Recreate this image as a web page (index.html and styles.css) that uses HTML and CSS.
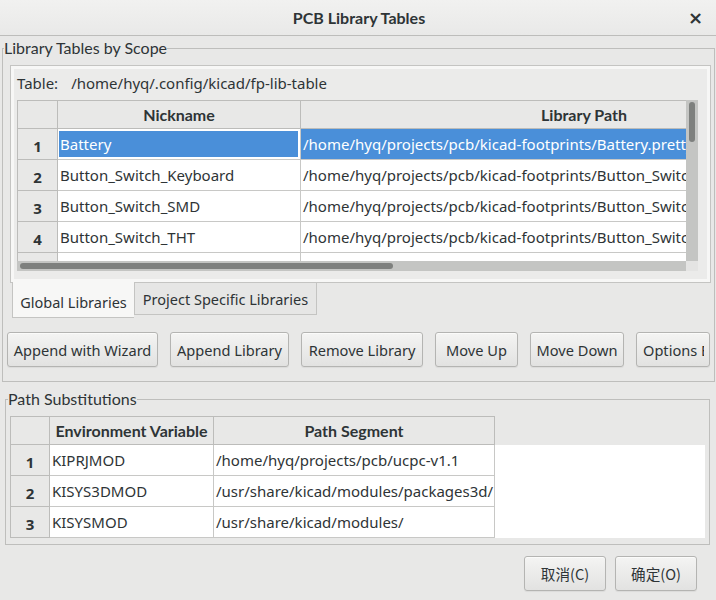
FILE: index.html
```html
<!DOCTYPE html>
<html lang="en">
<head>
<meta charset="utf-8">
<title>PCB Library Tables</title>
<link rel="stylesheet" href="styles.css">
</head>
<body>
<div class="window">
  <header class="titlebar">
    <span class="title">PCB Library Tables</span>
    <span class="close">×</span>
  </header>
  <main class="content">
    <fieldset class="group scope">
      <legend>Library Tables by Scope</legend>
      <div class="group-body scope-body">
        <div class="notebook">
          <div class="page">
            <div class="table-path"><span class="tp-label">Table:</span><span>/home/hyq/.config/kicad/fp-lib-table</span></div>
            <div class="gridwrap">
              <div class="viewport">
                <div class="grid lib-grid">
                  <div class="cell corner"></div>
                  <div class="cell colhead">Nickname</div>
                  <div class="cell colhead">Library Path</div>

                  <div class="cell rowhead">1</div>
                  <div class="cell sel-edit"><span class="editor">Battery</span></div>
                  <div class="cell sel">/home/hyq/projects/pcb/kicad-footprints/Battery.pretty</div>

                  <div class="cell rowhead">2</div>
                  <div class="cell">Button_Switch_Keyboard</div>
                  <div class="cell">/home/hyq/projects/pcb/kicad-footprints/Button_Switch_Keyboard.pretty</div>

                  <div class="cell rowhead">3</div>
                  <div class="cell">Button_Switch_SMD</div>
                  <div class="cell">/home/hyq/projects/pcb/kicad-footprints/Button_Switch_SMD.pretty</div>

                  <div class="cell rowhead">4</div>
                  <div class="cell">Button_Switch_THT</div>
                  <div class="cell">/home/hyq/projects/pcb/kicad-footprints/Button_Switch_THT.pretty</div>

                  <div class="cell rowhead">5</div>
                  <div class="cell">Buzzer_Beeper</div>
                  <div class="cell">/home/hyq/projects/pcb/kicad-footprints/Buzzer_Beeper.pretty</div>
                </div>
              </div>
              <div class="vscroll"><div class="vthumb"></div></div>
              <div class="hscroll"><div class="hthumb"></div></div>
              <div class="scorner"></div>
            </div>
          </div>
        </div>
        <div class="tabs">
          <div class="tab active">Global Libraries</div>
          <div class="tab">Project Specific Libraries</div>
        </div>
        <div class="actions">
          <button class="btn w-wizard">Append with Wizard</button>
          <button class="btn w-append">Append Library</button>
          <button class="btn w-remove">Remove Library</button>
          <button class="btn w-up">Move Up</button>
          <button class="btn w-down">Move Down</button>
          <button class="btn w-options"><span class="clip">Options Editor</span></button>
        </div>
      </div>
    </fieldset>

    <fieldset class="group subst">
      <legend>Path Substitutions</legend>
      <div class="group-body subst-body">
        <div class="env-window">
          <div class="grid env-grid">
            <div class="cell corner"></div>
            <div class="cell colhead">Environment Variable</div>
            <div class="cell colhead">Path Segment</div>

            <div class="cell rowhead">1</div>
            <div class="cell">KIPRJMOD</div>
            <div class="cell">/home/hyq/projects/pcb/ucpc-v1.1</div>

            <div class="cell rowhead">2</div>
            <div class="cell">KISYS3DMOD</div>
            <div class="cell">/usr/share/kicad/modules/packages3d/</div>

            <div class="cell rowhead">3</div>
            <div class="cell">KISYSMOD</div>
            <div class="cell">/usr/share/kicad/modules/</div>
          </div>
        </div>
      </div>
    </fieldset>

    <div class="dialog-buttons">
      <button class="btn dlg">取消(C)</button>
      <button class="btn dlg">确定(O)</button>
    </div>
  </main>
</div>
</body>
</html>
```

FILE: styles.css
```css
* { box-sizing: border-box; }

html, body {
  margin: 0;
  padding: 0;
}

body {
  width: 716px;
  height: 600px;
  overflow: hidden;
  background: #e8e8e7;
  color: #2e3436;
  font-family: "Noto Sans", "Noto Sans CJK SC", sans-serif;
  font-size: 15px;
}

.window {
  width: 716px;
  height: 600px;
  display: flex;
  flex-direction: column;
}

/* Title bar */
.titlebar {
  height: 36px;
  flex: none;
  display: flex;
  align-items: center;
  justify-content: center;
  position: relative;
  background: linear-gradient(#f1f1f0, #e9e9e8);
  border-bottom: 1px solid #bdbdbb;
}

.title {
  font-family: Lato, "Noto Sans", sans-serif;
  font-weight: 700;
  font-size: 16px;
  color: #2e3436;
  margin-left: 2px;
}

.close {
  position: absolute;
  right: 13px;
  top: 7px;
  font-size: 18px;
  font-weight: 700;
  color: #2e3436;
  font-family: "DejaVu Sans", sans-serif;
}

/* Groups */
.content {
  display: flex;
  flex-direction: column;
}

.group {
  margin: 0;
  padding: 0;
  border: 1px solid #bebebc;
  min-width: 0;
}

.group legend {
  padding: 0;
  font-family: Lato, "Noto Sans", sans-serif;
  font-size: 16px;
  line-height: 18px;
  color: #2e3436;
}

.scope {
  margin: 3px 1px 0 2px;
}

.scope legend {
  margin-left: 1px;
}

.scope-body {
  padding: 8px 3px 14px 4px;
}

.subst {
  margin: 8px 6px 0 5px;
}

.subst legend {
  margin-left: 2px;
}

.subst-body {
  padding: 8px 4px 6px 4px;
}

/* Notebook */
.notebook {
  margin-left: 3px;
  border: 1px solid #c4c4c2;
  background: #f7f7f6;
  padding: 3px 3px 3px 3px;
}

.page {
  background: #ebebea;
  padding: 5px 9px 8px 3px;
}

.table-path {
  display: flex;
  gap: 13px;
  line-height: 18px;
  height: 18px;
  margin-bottom: 8px;
  color: #2e3436;
}

.gridwrap {
  display: grid;
  grid-template-columns: 669px 12px;
  grid-template-rows: 161px 10px;
}

.viewport {
  overflow: hidden;
  background: #ffffff;
}

.vscroll {
  background: #c4c5c3;
  padding: 2px 3px 0 3px;
}

.vthumb {
  width: 6px;
  height: 40px;
  border-radius: 3px;
  background: #7e807e;
}

.hscroll {
  background: #c4c5c3;
  padding: 2px 0 0 3px;
}

.hthumb {
  width: 373px;
  height: 6px;
  border-radius: 3px;
  background: #7e807e;
}

.scorner {
  background: #e4e4e3;
}

/* Grids */
.grid {
  display: grid;
  border-top: 1px solid #bcbcba;
  border-left: 1px solid #bcbcba;
  grid-auto-rows: 31px;
}

.lib-grid {
  grid-template-columns: 40px 243px 567px;
  grid-template-rows: 28px;
  width: max-content;
}

.env-grid {
  grid-template-columns: 39px 164px 281px;
  grid-template-rows: 28px;
  width: max-content;
}

.cell {
  border-right: 1px solid #c8c8c6;
  border-bottom: 1px solid #c8c8c6;
  background: #ffffff;
  padding: 0 0 0 2px;
  white-space: nowrap;
  overflow: hidden;
  display: flex;
  align-items: center;
  line-height: 20px;
}

.corner,
.colhead,
.rowhead {
  background: #e8e8e7;
  border-color: #bcbcba;
  font-family: Lato, "Noto Sans", sans-serif;
  font-weight: 700;
  font-size: 16px;
  justify-content: center;
  padding: 0;
}

.rowhead {
  font-family: "Noto Sans", sans-serif;
  font-size: 15px;
  padding-top: 3px;
}

.sel {
  background: #4a8fd9;
  color: #ffffff;
}

.sel-edit {
  padding: 2px 2px 2px 1px;
}

.editor {
  display: flex;
  align-items: center;
  width: 100%;
  height: 100%;
  background: #4a8fd9;
  color: #ffffff;
  padding-left: 1px;
}

.env-window {
  background: linear-gradient(#e8e8e7 0, #e8e8e7 29px, #ffffff 29px, #ffffff 122px, #e8e8e7 122px);
  height: 122px;
}

/* Tabs */
.tabs {
  display: flex;
  align-items: flex-start;
  margin-top: -1px;
  margin-left: 5px;
}

.tab {
  height: 32px;
  margin-top: 1px;
  padding: 0 6px;
  display: flex;
  align-items: center;
  justify-content: center;
  background: #e6e6e5;
  border: 1px solid #c4c4c2;
  border-top: none;
  color: #2e3436;
  width: 183px;
  white-space: nowrap;
  font-size: 14.5px;
}

.tab.active {
  margin-top: 0;
  height: 36px;
  width: 122px;
  background: #f7f7f6;
  border-right: none;
  padding-top: 4px;
}

/* Buttons */
.actions {
  display: flex;
  gap: 12px;
  margin-top: 14px;
}

.btn {
  height: 35px;
  font-family: "Noto Sans", "Noto Sans CJK SC", sans-serif;
  font-size: 14.6px;
  color: #2e3436;
  background: linear-gradient(#f4f4f3, #e2e2e1);
  border: 1px solid #b4b4b2;
  border-radius: 3px;
  box-shadow: 0 1px 0 rgba(255,255,255,0.6) inset, 0 1px 1px rgba(0,0,0,0.06);
  padding: 0;
  white-space: nowrap;
}

.w-wizard { width: 151px; }
.w-append { width: 119px; }
.w-remove { width: 122px; }
.w-up { width: 83px; }
.w-down { width: 94px; }
.w-options {
  width: 74px;
  padding: 0 0 0 6px;
  display: flex;
  align-items: center;
  justify-content: flex-start;
}

.clip {
  display: block;
  flex: none;
  width: 61px;
  overflow: hidden;
  white-space: nowrap;
  text-align: left;
}

.dialog-buttons {
  display: flex;
  justify-content: flex-end;
  gap: 9px;
  margin-top: 11px;
  padding-right: 19px;
}

.dlg {
  width: 82px;
  font-family: "Noto Sans CJK SC", "Noto Sans", sans-serif;
}
```
